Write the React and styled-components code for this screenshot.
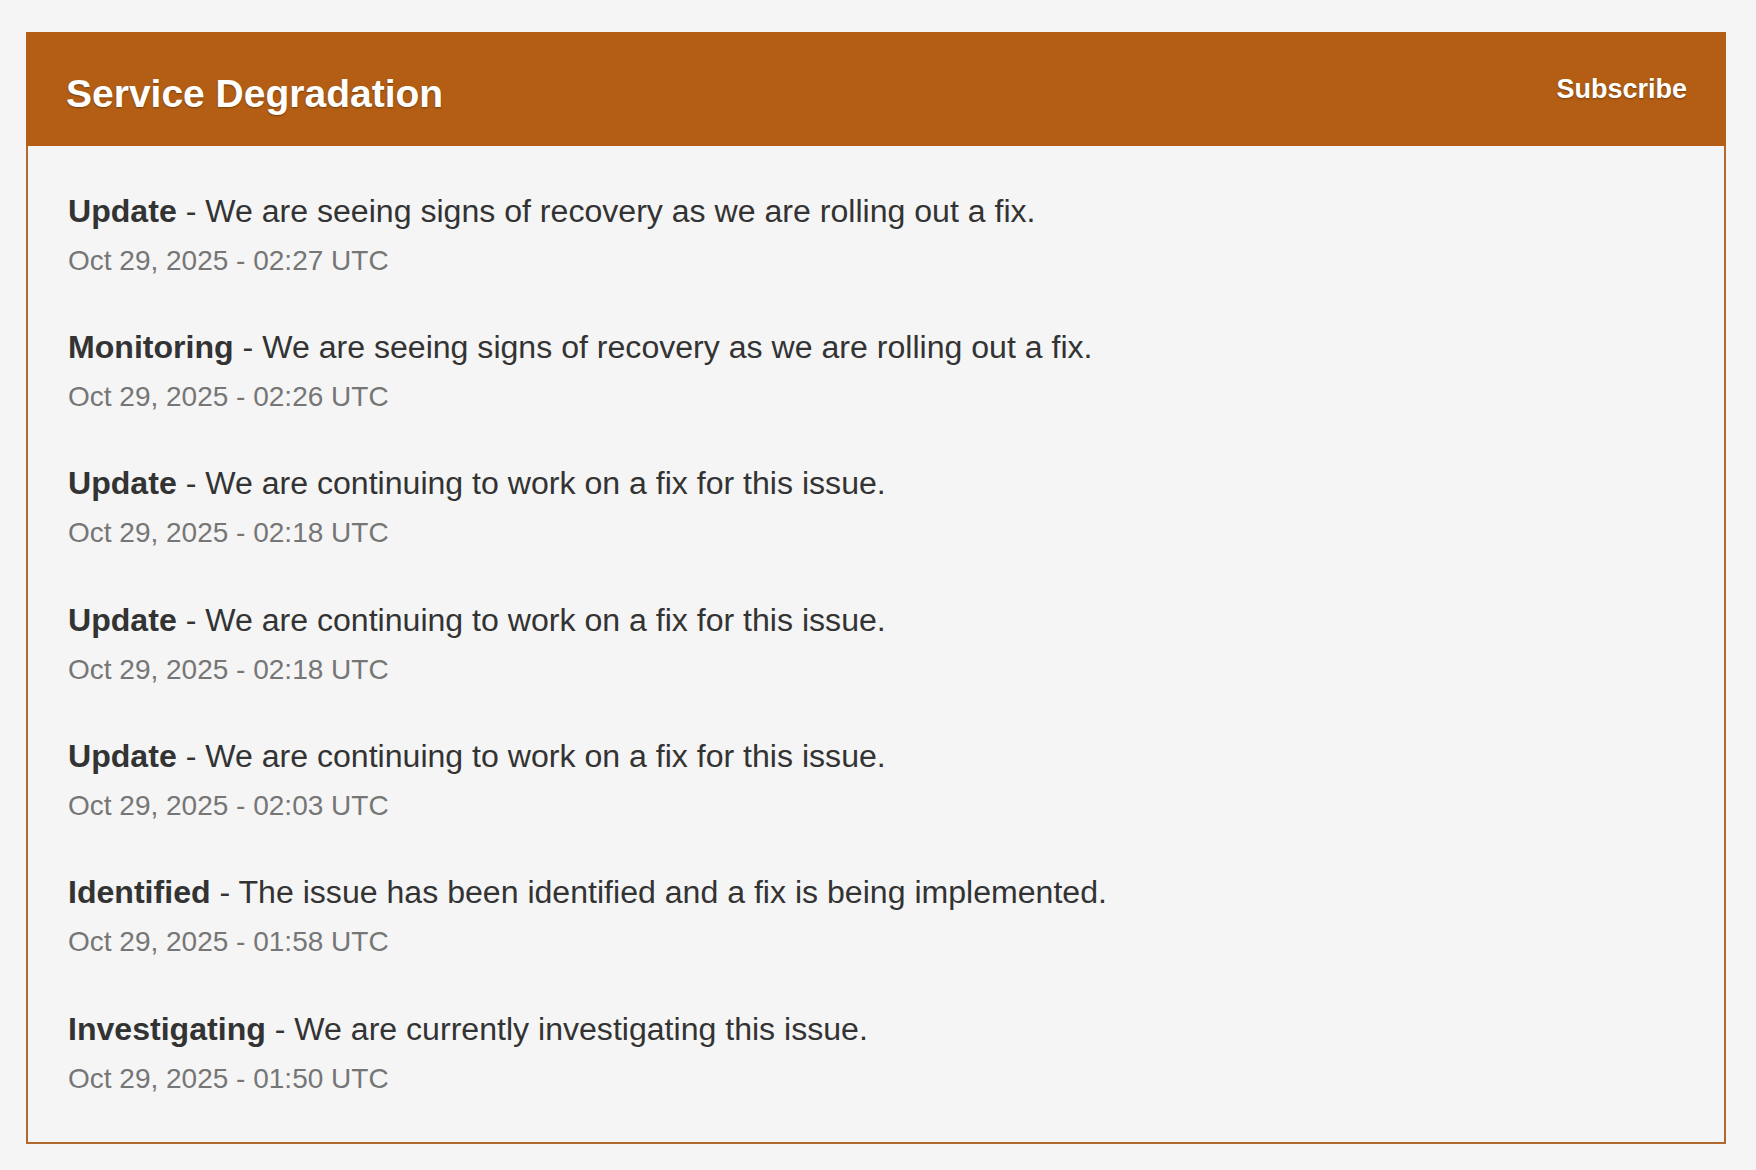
import React from "react";
import styled, { createGlobalStyle } from "styled-components";

const GlobalStyle = createGlobalStyle`
  html, body {
    margin: 0;
    padding: 0;
    background: #f5f5f5;
  }
  body {
    font-family: "Liberation Sans", Arial, Helvetica, sans-serif;
    -webkit-font-smoothing: antialiased;
  }
`;

const Page = styled.div`
  padding: 32px 30px 27px 26px;
  background: #f5f5f5;
`;

const Card = styled.section`
  border: 2px solid #b0692f;
  background: #f5f5f5;
`;

const Header = styled.header`
  display: flex;
  justify-content: space-between;
  align-items: flex-start;
  margin: -2px -2px 0;
  padding: 39px 39px 29px 40px;
  background: #b35e14;
`;

const Title = styled.h2`
  margin: 0;
  font-size: 39px;
  line-height: 46px;
  font-weight: 700;
  color: #ffffff;
  text-shadow: 0 1px 2px rgba(0, 0, 0, 0.35);
`;

const SubscribeLink = styled.a`
  margin-top: 2px;
  font-size: 27px;
  line-height: 32px;
  font-weight: 700;
  color: #ffffff;
  text-decoration: none;
  text-shadow: 0 1px 2px rgba(0, 0, 0, 0.35);
  cursor: pointer;
`;

const Body = styled.div`
  display: flex;
  flex-direction: column;
  gap: 38.4px;
  padding: 39.5px 39px 40px 40px;
`;

const Entry = styled.div`
  display: flex;
  flex-direction: column;
`;

const Message = styled.div`
  font-size: 32.1px;
  line-height: 50px;
  color: #333333;
`;

const Status = styled.strong`
  font-weight: 700;
`;

const Timestamp = styled.small`
  display: block;
  margin-top: 2px;
  font-size: 28px;
  line-height: 46px;
  color: #767676;
`;

const updates = [
  { status: "Update", text: "We are seeing signs of recovery as we are rolling out a fix.", time: "Oct 29, 2025 - 02:27 UTC" },
  { status: "Monitoring", text: "We are seeing signs of recovery as we are rolling out a fix.", time: "Oct 29, 2025 - 02:26 UTC" },
  { status: "Update", text: "We are continuing to work on a fix for this issue.", time: "Oct 29, 2025 - 02:18 UTC" },
  { status: "Update", text: "We are continuing to work on a fix for this issue.", time: "Oct 29, 2025 - 02:18 UTC" },
  { status: "Update", text: "We are continuing to work on a fix for this issue.", time: "Oct 29, 2025 - 02:03 UTC" },
  { status: "Identified", text: "The issue has been identified and a fix is being implemented.", time: "Oct 29, 2025 - 01:58 UTC" },
  { status: "Investigating", text: "We are currently investigating this issue.", time: "Oct 29, 2025 - 01:50 UTC" },
];

export default function App() {
  return (
    <>
      <GlobalStyle />
      <Page>
        <Card>
          <Header>
            <Title>Service Degradation</Title>
            <SubscribeLink>Subscribe</SubscribeLink>
          </Header>
          <Body>
            {updates.map((u, i) => (
              <Entry key={i}>
                <Message>
                  <Status>{u.status}</Status> - {u.text}
                </Message>
                <Timestamp>{u.time}</Timestamp>
              </Entry>
            ))}
          </Body>
        </Card>
      </Page>
    </>
  );
}
